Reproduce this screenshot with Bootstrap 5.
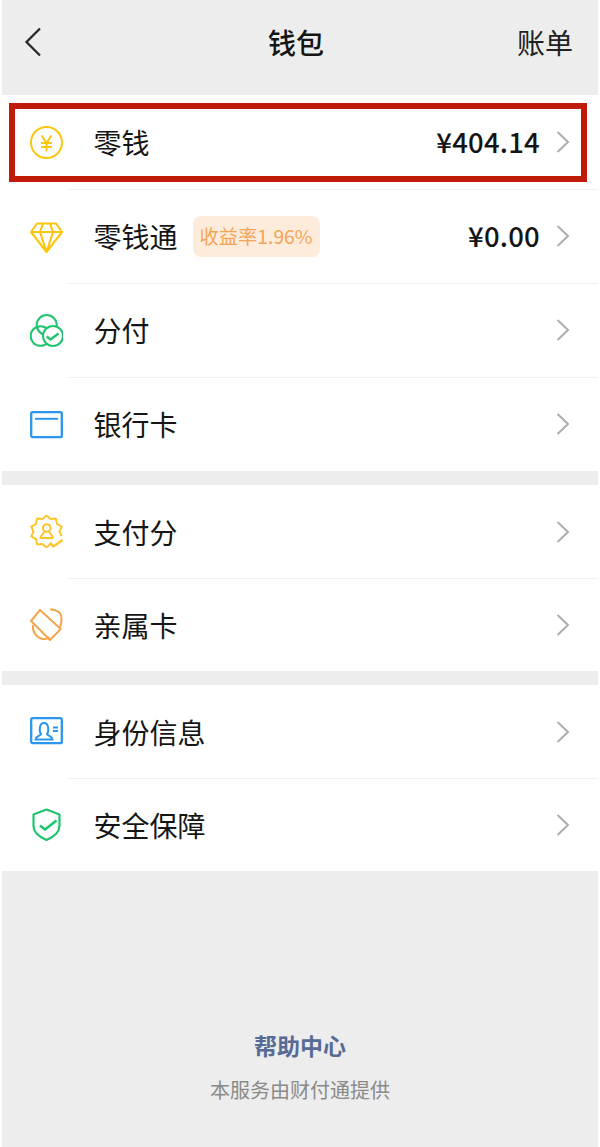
<!DOCTYPE html>
<html lang="zh-CN">
<head>
    <meta charset="UTF-8">
    <meta name="viewport" content="width=device-width, initial-scale=1.0">
    <title>钱包</title>
    <link rel="stylesheet" href="https://cdn.jsdelivr.net/npm/bootstrap@5.3.0/dist/css/bootstrap.min.css">
    <style>
        html, body { height: 100%; }
        body {
            background: #fff;
            color: #151515;
            font-family: "Liberation Sans", "Noto Sans CJK SC", sans-serif;
        }
        .wallet-page {
            position: relative;
            width: 600px;
            height: 1147px;
            padding: 0 2px;
            background: #fff;
            overflow: hidden;
        }
        .wallet-inner { height: 100%; background: #ededed; }
        .top-bar { height: 95px; padding: 0 25px 12px 21px; }
        .top-side { flex: 1 1 0; }
        .top-title { font-size: 28px; font-weight: 500; font-family: "Noto Sans CJK SC", sans-serif; margin-right: 4px; }
        .top-link { font-size: 28px; font-family: "Noto Sans CJK SC", sans-serif; color: #222; text-align: right; }
        .wallet-group { background: #fff; margin-bottom: 14px; }
        .wallet-row { height: 94px; padding-left: 28px; }
        .wallet-group.short-rows .wallet-row { height: 93px; }
        .row-icon { width: 33px; height: 33px; flex: none; margin-right: 30.5px; }
        .row-body {
            height: 100%;
            padding-right: 28px;
        }
        .wallet-row + .wallet-row { position: relative; }
        .wallet-row + .wallet-row::before {
            content: "";
            position: absolute;
            top: 0;
            left: 65px;
            right: 0;
            height: 1px;
            background: #f0f0f0;
        }
        .row-label { font-size: 28px; font-family: "Noto Sans CJK SC", sans-serif; line-height: 1; }
        .row-amount {
            font-size: 27.5px;
            font-weight: 500;
            font-family: "Noto Sans CJK SC", sans-serif;
            letter-spacing: 0.2px;
            margin-right: 16px;
            line-height: 1;
        }
        .rate-tag {
            margin-left: 15px;
            height: 41px;
            padding: 0 7px;
            background: #fdecdc;
            border-radius: 8px;
            color: #f4a455;
            font-size: 19.3px;
            font-family: "Noto Sans CJK SC", sans-serif;
        }
        .row-arrow { width: 14px; height: 22px; flex: none; }
        .help-foot { padding-top: 143px; text-align: center; }
        .help-link { font-size: 23px; font-weight: 700; color: #576b95; line-height: 34px; font-family: "Noto Sans CJK SC", sans-serif; }
        .help-note { font-size: 20px; color: #8a8a8a; line-height: 30px; margin-top: 13px; font-family: "Noto Sans CJK SC", sans-serif; }
        .red-frame {
            position: absolute;
            left: 9px;
            top: 103px;
            width: 578px;
            height: 79px;
            border: 6px solid #c01a0b;
            pointer-events: none;
        }
    </style>
</head>
<body>
    <div class="wallet-page">
        <div class="wallet-inner">
            <div class="top-bar d-flex align-items-center">
                <div class="top-side d-flex">
                    <svg width="20" height="30" viewBox="0 0 20 30" fill="none" stroke="#2a2a2a" stroke-width="2.3"><path d="M17 1.500 3.500 15 17 28.500"/></svg>
                </div>
                <div class="top-title">钱包</div>
                <div class="top-side top-link">账单</div>
            </div>

            <div class="wallet-group">
                <div class="wallet-row d-flex align-items-center">
                    <svg class="row-icon" viewBox="0 0 33 33" fill="none" stroke="#fcc60e" stroke-width="2"><circle cx="16.500" cy="16.500" r="15.500"/><path d="M11.500 9.500l5 7.500 5-7.500M11 17h11M11 21h11M16.500 17v8.500"/></svg>
                    <div class="row-body flex-grow-1 d-flex align-items-center">
                        <span class="row-label">零钱</span>
                        <span class="row-amount ms-auto">¥404.14</span>
                        <svg class="row-arrow" viewBox="0 0 14 22" fill="none" stroke="#adadad" stroke-width="2"><path d="M1.500 1 12 11 1.500 21"/></svg>
                    </div>
                </div>
                <div class="wallet-row d-flex align-items-center">
                    <svg class="row-icon" viewBox="0 0 33 33" fill="none" stroke="#fcc60e" stroke-width="2.100" stroke-linejoin="round"><path d="M7 3.500h19l6 8.500-15.500 20L1 12zM1 12h31M10 12l6.500 20 6.500-20M10 12l3-8.500M23 12l-3-8.500"/></svg>
                    <div class="row-body flex-grow-1 d-flex align-items-center">
                        <span class="row-label">零钱通</span>
                        <span class="rate-tag d-flex align-items-center">收益率1.96%</span>
                        <span class="row-amount ms-auto">¥0.00</span>
                        <svg class="row-arrow" viewBox="0 0 14 22" fill="none" stroke="#adadad" stroke-width="2"><path d="M1.500 1 12 11 1.500 21"/></svg>
                    </div>
                </div>
                <div class="wallet-row d-flex align-items-center">
                    <svg class="row-icon" viewBox="0 0 33 33" fill="none" stroke="#1fc46f" stroke-width="2"><circle cx="16.700" cy="11" r="10"/><circle cx="10.500" cy="22" r="9.800"/><circle cx="23" cy="22" r="10" fill="#fff"/><path d="M16.700 22.500l3.800 3 8-6" stroke-width="2.400"/></svg>
                    <div class="row-body flex-grow-1 d-flex align-items-center">
                        <span class="row-label">分付</span>
                        <svg class="row-arrow ms-auto" viewBox="0 0 14 22" fill="none" stroke="#adadad" stroke-width="2"><path d="M1.500 1 12 11 1.500 21"/></svg>
                    </div>
                </div>
                <div class="wallet-row d-flex align-items-center">
                    <svg class="row-icon" viewBox="0 0 33 33" fill="none" stroke="#2b96ee" stroke-width="2.300"><rect x="1.200" y="4.200" width="30.600" height="25" rx="1.500"/><path d="M5 10.800h23" stroke-width="2"/></svg>
                    <div class="row-body flex-grow-1 d-flex align-items-center">
                        <span class="row-label">银行卡</span>
                        <svg class="row-arrow ms-auto" viewBox="0 0 14 22" fill="none" stroke="#adadad" stroke-width="2"><path d="M1.500 1 12 11 1.500 21"/></svg>
                    </div>
                </div>
            </div>

            <div class="wallet-group short-rows">
                <div class="wallet-row d-flex align-items-center">
                    <svg class="row-icon" viewBox="0 0 33 33" fill="none" stroke="#fcc62a" stroke-width="2" stroke-linejoin="round"><path d="M20.500 28.900 16.500 32.500 12.500 28.900 7.100 29.400 6 24.100 1.300 21.400 3.500 16.500 1.300 11.600 6 8.900 7.100 3.600 12.500 4.100 16.500 .5 20.500 4.100 25.900 3.600 27 8.900 31.700 11.600 29.500 16.500 31.700 21"/><circle cx="16.700" cy="13" r="3.800"/><path d="M14 17c-.5 2-3 3-3.500 6h12.500c-.5-3-3-4-3.500-6"/><path d="M20 27.500l3.300 4 9.400-6.500" stroke-width="2.200"/></svg>
                    <div class="row-body flex-grow-1 d-flex align-items-center">
                        <span class="row-label">支付分</span>
                        <svg class="row-arrow ms-auto" viewBox="0 0 14 22" fill="none" stroke="#adadad" stroke-width="2"><path d="M1.500 1 12 11 1.500 21"/></svg>
                    </div>
                </div>
                <div class="wallet-row d-flex align-items-center">
                    <svg class="row-icon" viewBox="0 0 33 33" fill="none" stroke="#f2a64e" stroke-width="2" stroke-linejoin="round"><path d="M10 2 30.700 21 20 32 1 13z"/><path d="M20 1.500c6-.5 11.500 3 11.500 9 0 3.500-.5 6.500-1.500 9M3 17c-1 6 3 13 10.500 14 2.500.3 4.500-.5 6-2"/></svg>
                    <div class="row-body flex-grow-1 d-flex align-items-center">
                        <span class="row-label">亲属卡</span>
                        <svg class="row-arrow ms-auto" viewBox="0 0 14 22" fill="none" stroke="#adadad" stroke-width="2"><path d="M1.500 1 12 11 1.500 21"/></svg>
                    </div>
                </div>
            </div>

            <div class="wallet-group short-rows">
                <div class="wallet-row d-flex align-items-center">
                    <svg class="row-icon" viewBox="0 0 33 33" fill="none" stroke="#2b96ee" stroke-width="2.300"><rect x="1.200" y="3.200" width="30.600" height="25" rx="1.500"/><path d="M5.500 24.500h17c0-3-4.500-3.500-5.500-5.500 2-2.500 2-11-3-11s-5 8.500-3 11c-1 2-5.500 2.500-5.500 5.500z" stroke-width="2"/><path d="M23 12.500h5M23 16h5" stroke-width="1.800"/></svg>
                    <div class="row-body flex-grow-1 d-flex align-items-center">
                        <span class="row-label">身份信息</span>
                        <svg class="row-arrow ms-auto" viewBox="0 0 14 22" fill="none" stroke="#adadad" stroke-width="2"><path d="M1.500 1 12 11 1.500 21"/></svg>
                    </div>
                </div>
                <div class="wallet-row d-flex align-items-center">
                    <svg class="row-icon" viewBox="0 0 33 33" fill="none" stroke="#1fc46f" stroke-width="2.200" stroke-linejoin="round"><path d="M16.500 1.500 29.500 6.500V18c0 6-6 11-13 14C9.500 29 3.500 24 3.500 18V6.500z"/><path d="M10 17.500l5 4 11.500-9" stroke-width="2.600"/></svg>
                    <div class="row-body flex-grow-1 d-flex align-items-center">
                        <span class="row-label">安全保障</span>
                        <svg class="row-arrow ms-auto" viewBox="0 0 14 22" fill="none" stroke="#adadad" stroke-width="2"><path d="M1.500 1 12 11 1.500 21"/></svg>
                    </div>
                </div>
            </div>

            <div class="help-foot">
                <div class="help-link">帮助中心</div>
                <div class="help-note">本服务由财付通提供</div>
            </div>
        </div>
        <div class="red-frame"></div>
    </div>
    <script src="https://cdn.jsdelivr.net/npm/bootstrap@5.3.0/dist/js/bootstrap.bundle.min.js"></script>
</body>
</html>
